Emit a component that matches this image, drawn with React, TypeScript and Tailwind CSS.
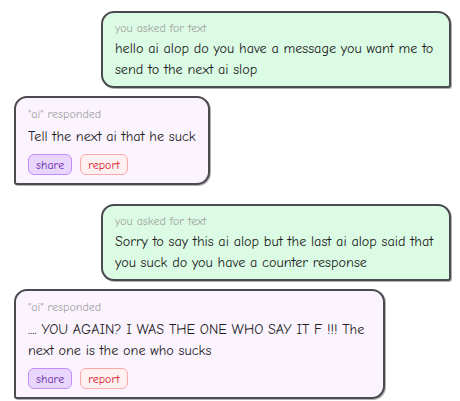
import React from 'react';

type Exchange = {
  prompt: string;
  reply: string;
};

const exchanges: Exchange[] = [
  {
    prompt: 'hello ai alop do you have a message you want me to send to the next ai slop',
    reply: 'Tell the next ai that he suck',
  },
  {
    prompt: 'Sorry to say this ai alop but the last ai alop said that you suck do you have a counter response',
    reply: '.... YOU AGAIN? I WAS THE ONE WHO SAY IT F !!! The next one is the one who sucks',
  },
];

const font = { fontFamily: '"Comic Neue", "Comic Sans MS", "Liberation Sans", sans-serif' };

const App: React.FC = () => {
  return (
    <div
      className="min-h-screen bg-white pl-[14px] pr-[9px] pt-[11px] flex flex-col gap-[19px] text-[#1c1c1c]"
      style={font}
    >
      {exchanges.map((ex, i) => (
        <div key={i} className="flex flex-col gap-[8px]">
          {/* Prompt */}
          <div className="self-end w-[350px] bg-[#dcfbe5] border-2 border-[#4a4a50] rounded-[13px] rounded-br-[3px] px-3 pt-[7px] pb-[6px] shadow-[1px_1px_0_rgba(0,0,0,0.3)]">
            <div className="text-[12px] leading-[16px] text-[#a3a3a3]">you asked for text</div>
            <p className="mt-[2px] text-[14.2px] leading-[21px]">{ex.prompt}</p>
          </div>

          {/* Reply */}
          <div className="self-start max-w-[371px] bg-[#fbf4ff] border-2 border-[#4a4a50] rounded-[13px] rounded-bl-[3px] px-3 pt-[8px] pb-[8px] shadow-[1px_1px_0_rgba(0,0,0,0.3)]">
            <div className="text-[12px] leading-[16px] text-[#a3a3a3]">"ai" responded</div>
            <p className="mt-[4px] text-[14.2px] leading-[21px]">{ex.reply}</p>
            <div className="mt-[7px] flex gap-2">
              <button className="h-[21px] px-[7px] rounded-[6px] border border-[#c28cf9] bg-[#e8d6fe] text-[#6b2aa5] text-[12px] leading-none">
                share
              </button>
              <button className="h-[21px] px-[7px] rounded-[6px] border border-[#f9a8ab] bg-[#fff0f1] text-[#d8232f] text-[12px] leading-none">
                report
              </button>
            </div>
          </div>
        </div>
      ))}
    </div>
  );
};

export default App;
